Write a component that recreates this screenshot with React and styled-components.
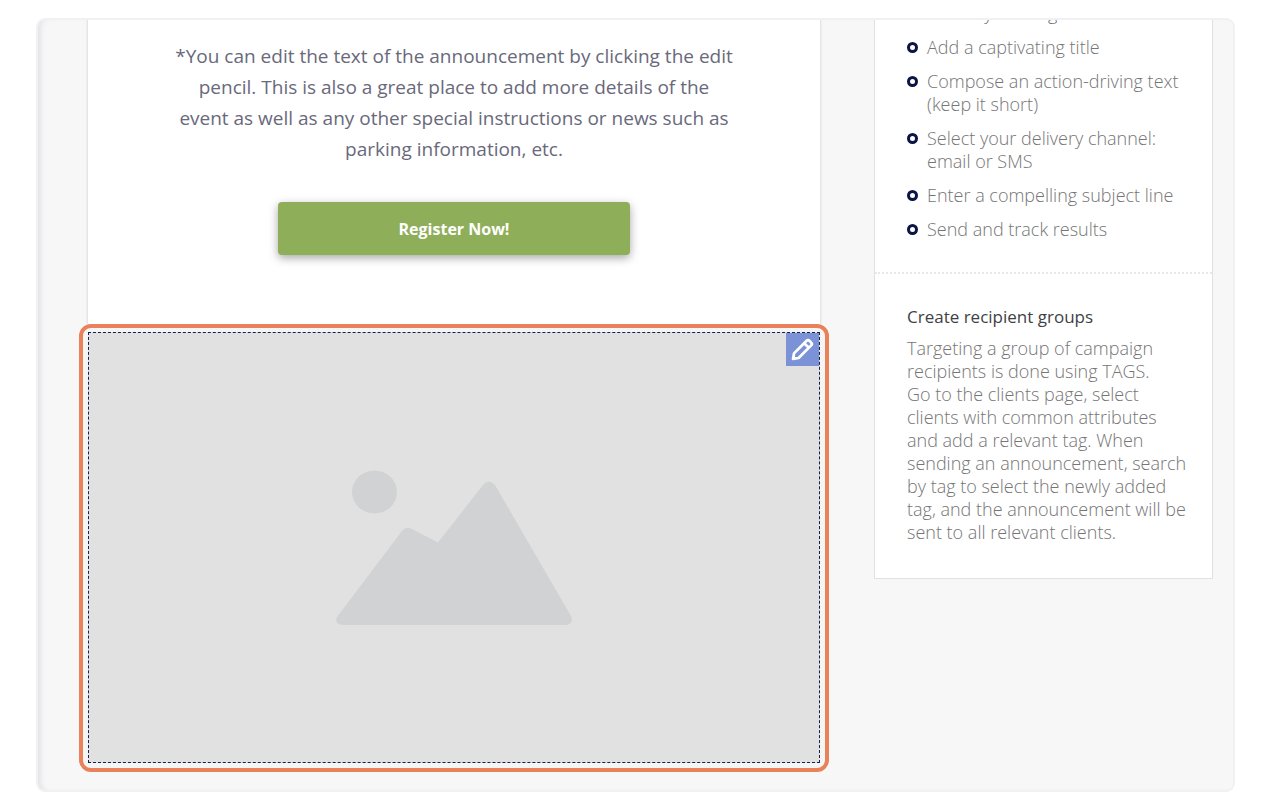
import React, { memo } from 'react';
import styled, { createGlobalStyle } from 'styled-components';

const GlobalStyle = createGlobalStyle`
    *,
    *::before {
        box-sizing: border-box;
    }

    body {
        margin: 0;
        background: #fff;
        font-family: 'Open Sans', 'Noto Sans', sans-serif;
    }
`;

const Page = styled.div`
    padding: 18px 33px 16px 36px;
`;

// Rounded viewport that clips the scrolled editor
const Frame = styled.div`
    display: flex;
    align-items: flex-start;
    gap: 53px;
    padding: 0 20px 18px 49px;
    overflow: hidden;
    border: 2px solid #f1f1f3;
    border-radius: 9px;
    background: #f7f7f7;
    box-shadow: inset 6px 0 6px -4px #dedee2;
`;

const Announcement = styled.main`
    flex: 1;
    min-width: 0;
`;

const Message = styled.section`
    padding: 21px 85px 69px;
    border: solid #e4e4e4;
    border-width: 0 1px;
    background: #fff;
    text-align: center;
    box-shadow: 0 0 2px #e4e4e4;
`;

const MessageText = styled.p`
    margin: 0 0 37px;
    color: #69697b;
    font-size: 19px;
    line-height: 31px;
`;

const RegisterButton = styled.button`
    width: 352px;
    max-width: 100%;
    height: 53px;
    display: block;
    margin: 0 auto;
    border: 0;
    border-radius: 4px;
    background: #8fae5a;
    color: #fff;
    font-family: inherit;
    font-size: 16px;
    font-weight: 700;
    box-shadow: 0 3px 10px rgba(0, 0, 0, 0.35);
    cursor: pointer;
`;

const Selection = styled.section`
    margin: 0 -8px;
    padding: 4px 5px 5px;
    border: 4px solid #e9815a;
    border-radius: 12px;
    background: #f5f5f6;
`;

const Placeholder = styled.div`
    position: relative;
    display: flex;
    align-items: center;
    justify-content: center;
    min-height: 431px;
    border: 1px dashed #14204a;
    background: #e1e1e1;
`;

const EditButton = styled.button`
    position: absolute;
    top: 0;
    right: 0;
    display: flex;
    align-items: center;
    justify-content: center;
    width: 33px;
    height: 33px;
    padding: 0;
    border: 0;
    background: #7b93d6;
    color: #fff;
    cursor: pointer;
`;

const Tips = styled.aside`
    flex: 0 0 339px;
    border: solid #e1e1e1;
    border-width: 0 1px 1px;
    background: #fff;
    color: #757575;
    font-size: 18px;
    font-weight: 300;
    line-height: 23px;
`;

const TipSection = styled.section`
    padding: 31px 22px 31px 32px;

    & + & {
        padding-bottom: 34px;
        border-top: 2px dotted #e8e8e8;
    }
`;

const TipList = styled.ul`
    display: flex;
    flex-direction: column;
    gap: 11px;
    margin: -49px 0 0;
    padding: 0;
    list-style: none;
`;

const TipItem = styled.li`
    display: flex;
    align-items: flex-start;
    gap: 9px;

    &::before {
        content: '';
        flex: none;
        width: 11px;
        height: 11px;
        margin-top: 6px;
        border: 3px solid #0b1546;
        border-radius: 50%;
    }
`;

const TipTitle = styled.h2`
    margin: 0 0 9px;
    color: #3f3f46;
    font-size: 17px;
    font-weight: 400;
    line-height: 23px;
`;

const TipText = styled.p`
    margin: 0;
`;

const tips = [
    'Define your target audience',
    'Add a captivating title',
    'Compose an action-driving text (keep it short)',
    'Select your delivery channel: email or SMS',
    'Enter a compelling subject line',
    'Send and track results',
];

const PencilIcon = () => (
    <svg width="25" height="25" viewBox="0 0 25 25" fill="none" stroke="currentColor" strokeWidth="2.7" strokeLinejoin="round" aria-hidden="true">
        <path d="M3 22 4 16.400 16.600 3.800Q18 2.400 19.400 3.800L21.200 5.600Q22.600 7 21.200 8.400L8.600 21Z" />
        <path d="M14.200 6.200 18.800 10.800" />
        <path d="M3 22 3.600 18.600 6.400 21.400Z" fill="currentColor" strokeWidth="1" />
    </svg>
);

const PictureIcon = () => (
    <svg width="236" height="156" viewBox="0 0 236 156" fill="#d1d2d4" aria-hidden="true">
        <ellipse cx="38.5" cy="22" rx="22.5" ry="21.5" />
        <path d="M1 147 66 61Q70 56 75 58.500L102 72.500 147 15Q153 8 159 15L235 146Q238 154 230 155H6Q-2 154 1 147Z" />
    </svg>
);

const App = memo(() => {
    return (
        <>
            <GlobalStyle />
            <Page>
                <Frame>
                    <Announcement>
                        <Message>
                            <MessageText>
                                *You can edit the text of the announcement by clicking the edit pencil. This is also a
                                great place to add more details of the event as well as any other special instructions
                                or news such as parking information, etc.
                            </MessageText>
                            <RegisterButton type="button">Register Now!</RegisterButton>
                        </Message>
                        <Selection>
                            <Placeholder>
                                <PictureIcon />
                                <EditButton type="button" aria-label="Edit image">
                                    <PencilIcon />
                                </EditButton>
                            </Placeholder>
                        </Selection>
                    </Announcement>

                    <Tips>
                        <TipSection>
                            <TipList>
                                {tips.map((v, i) => (
                                    <TipItem key={i}>{v}</TipItem>
                                ))}
                            </TipList>
                        </TipSection>
                        <TipSection>
                            <TipTitle>Create recipient groups</TipTitle>
                            <TipText>
                                Targeting a group of campaign recipients is done using TAGS.
                                <br />
                                Go to the clients page, select clients with common attributes and add a relevant tag.
                                When sending an announcement, search by tag to select the newly added tag, and the
                                announcement will be sent to all relevant clients.
                            </TipText>
                        </TipSection>
                    </Tips>
                </Frame>
            </Page>
        </>
    );
});

export default App;
